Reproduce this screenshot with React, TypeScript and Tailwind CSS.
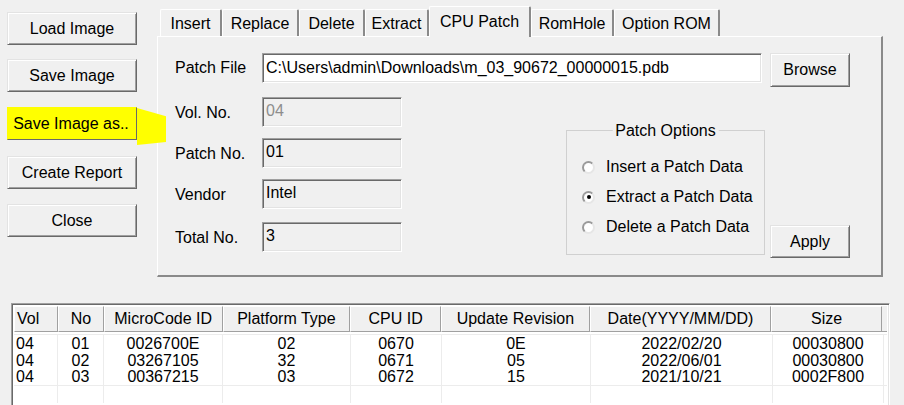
import React from 'react';

const raised =
  'border border-t-[#e3e3e3] border-l-[#e3e3e3] border-r-[#696969] border-b-[#696969] shadow-[inset_1px_1px_0_#ffffff,inset_-1px_-1px_0_#a0a0a0]';
const sunken =
  'border border-t-[#a0a0a0] border-l-[#a0a0a0] border-r-white border-b-white shadow-[inset_1px_1px_0_#696969,inset_-1px_-1px_0_#e3e3e3]';

const WinButton = ({ label, className = '' }: { label: string; className?: string }) => (
  <button className={`flex items-center justify-center bg-[#f0f0f0] text-black ${raised} ${className}`}>
    {label}
  </button>
);

const tabs = [
  { name: 'Insert', w: 'w-[62px]' },
  { name: 'Replace', w: 'w-[77px]' },
  { name: 'Delete', w: 'w-[66px]' },
  { name: 'Extract', w: 'w-[64px]' },
  { name: 'CPU Patch', w: 'w-[102px]', active: true },
  { name: 'RomHole', w: 'w-[83px]' },
  { name: 'Option ROM', w: 'w-[106px]' },
];

const fields = [
  { label: 'Vol. No.', value: '04', disabled: true, mt: 'mt-0' },
  { label: 'Patch No.', value: '01', mt: 'mt-[11px]' },
  { label: 'Vendor', value: 'Intel', mt: 'mt-[11px]' },
  { label: 'Total No.', value: '3', mt: 'mt-[13px]' },
];

const options = [
  { label: 'Insert a Patch Data', checked: false },
  { label: 'Extract a Patch Data', checked: true },
  { label: 'Delete a Patch Data', checked: false },
];

const columns = [
  { name: 'Vol', w: 'w-[44px]', left: true },
  { name: 'No', w: 'w-[46px]' },
  { name: 'MicroCode ID', w: 'w-[119px]' },
  { name: 'Platform Type', w: 'w-[128px]' },
  { name: 'CPU ID', w: 'w-[91px]' },
  { name: 'Update Revision', w: 'w-[149px]' },
  { name: 'Date(YYYY/MM/DD)', w: 'w-[182px]' },
  { name: 'Size', w: 'w-[111px]' },
];

const rows = [
  ['04', '01', '0026700E', '02', '0670', '0E', '2022/02/20', '00030800'],
  ['04', '02', '03267105', '32', '0671', '05', '2022/06/01', '00030800'],
  ['04', '03', '00367215', '03', '0672', '15', '2021/10/21', '0002F800'],
  ['', '', '', '', '', '', '', ''],
];

// classic sunken radio circle
const Radio = ({ checked }: { checked: boolean }) => (
  <span className="flex h-[13px] w-[13px] shrink-0 items-center justify-center rounded-full border-2 border-t-[#9a9a9a] border-l-[#9a9a9a] border-r-[#e6e6e6] border-b-[#e6e6e6] bg-white">
    {checked && <span className="h-[4px] w-[4px] rounded-full bg-black" />}
  </span>
);

export default function App() {
  return (
    <div className="h-[405px] w-[904px] overflow-hidden bg-[#f0f0f0] font-['Liberation_Sans',Arial,sans-serif] text-[16px] leading-none text-black">
      <div className="flex h-[277px] pt-[6px]">
        {/* left button column */}
        <div className="ml-[7px] flex w-[130px] flex-col pt-[6px]">
          <WinButton label="Load Image" className="h-[33px] w-[130px]" />
          <WinButton label="Save Image" className="mt-[14px] h-[33px] w-[130px]" />
          <div className="relative mt-[15px] h-[33px] w-[130px]">
            <button className="relative flex h-[33px] w-[130px] items-center justify-center border border-[#ffff00] border-r-[#696969] border-b-[#696969] bg-[#ffff00] pr-[2px] text-black">
              Save Image as..
            </button>
            <div className="absolute left-[130px] top-[1px] h-[37px] w-[29px] bg-[#ffff00] [clip-path:polygon(0_0,100%_22%,100%_92%,0_100%)]" />
          </div>
          <WinButton label="Create Report" className="mt-[16px] h-[33px] w-[130px]" />
          <WinButton label="Close" className="mt-[15px] h-[33px] w-[130px]" />
        </div>

        {/* tab control */}
        <div className="ml-[20px] flex w-[726px] flex-col">
          <div className="flex h-[30px] items-end pl-[3px]">
            {tabs.map((t) =>
              t.active ? (
                <div
                  key={t.name}
                  className={`relative z-10 -mb-[1px] flex h-[31px] items-start justify-center rounded-t-[2px] border-t border-l border-white border-r-2 border-r-[#8a8a8a] bg-[#f0f0f0] pt-[7px] ${t.w}`}
                >
                  {t.name}
                </div>
              ) : (
                <div
                  key={t.name}
                  className={`flex h-[27px] items-start justify-center rounded-t-[2px] border-t border-l border-white border-r-2 border-r-[#8a8a8a] bg-[#f0f0f0] pt-[6px] ${t.w}`}
                >
                  {t.name}
                </div>
              )
            )}
          </div>

          <div className="h-[241px] border-t border-l border-white border-r-2 border-b-2 border-r-[#8a8a8a] border-b-[#8a8a8a] pl-[17px] pt-[16px]">
            <div className="flex h-[34px] items-start">
              <div className="flex h-[30px] w-[87px] items-center">Patch File</div>
              <div className={`flex h-[30px] w-[500px] items-center bg-white pl-[3px] ${sunken}`}>
                C:\Users\admin\Downloads\m_03_90672_00000015.pdb
              </div>
              <WinButton label="Browse" className="ml-[8px] h-[34px] w-[80px]" />
            </div>

            <div className="mt-[10px] flex items-start">
              <div className="flex w-[227px] flex-col">
                {fields.map((f) => (
                  <div key={f.label} className={`flex h-[30px] items-center ${f.mt}`}>
                    <div className="w-[87px] pt-[2px]">{f.label}</div>
                    <div
                      className={`h-[30px] w-[140px] pl-[3px] pt-[4px] leading-[18px] ${sunken} ${
                        f.disabled ? 'text-[#8d8d8d]' : 'text-black'
                      }`}
                    >
                      {f.value}
                    </div>
                  </div>
                ))}
              </div>

              <div className="relative ml-[164px] mt-[33px] h-[125px] w-[199px] border border-[#d0d0d0] pl-[15px] pt-[21px]">
                <span className="absolute -top-[9px] left-1/2 -translate-x-1/2 whitespace-nowrap bg-[#f0f0f0] px-[3px] leading-[18px]">
                  Patch Options
                </span>
                {options.map((o) => (
                  <div key={o.label} className="flex h-[30px] items-center">
                    <Radio checked={o.checked} />
                    <span className="ml-[11px] whitespace-nowrap">{o.label}</span>
                  </div>
                ))}
              </div>

              <WinButton label="Apply" className="ml-[5px] mt-[128px] h-[33px] w-[80px]" />
            </div>
          </div>
        </div>
      </div>

      {/* list view */}
      <div className={`ml-[11px] mt-[26px] h-[110px] w-[879px] bg-white p-[2px] ${sunken}`}>
        <div className="flex h-[26px]">
          {columns.map((c) => (
            <div
              key={c.name}
              className={`flex h-[26px] items-center border border-t-white border-l-white border-r-[#a0a0a0] border-b-[#a0a0a0] bg-[#f0f0f0] ${c.w} ${
                c.left ? 'justify-start pl-[2px]' : 'justify-center'
              }`}
            >
              {c.name}
            </div>
          ))}
          <div className="h-[26px] w-[5px] border-b border-[#a0a0a0] bg-[#f0f0f0]" />
        </div>
        <div className="mt-[2px] border-t border-[#ececec]">
          {rows.map((r, i) => (
            <div key={i} className={`flex h-[17px] ${i === 2 ? 'border-b border-[#ececec]' : ''}`}>
              {r.map((v, j) => (
                <div
                  key={j}
                  className={`flex items-center border-r border-[#ececec] ${columns[j].w} ${
                    columns[j].left ? 'justify-start pl-[2px]' : 'justify-center'
                  }`}
                >
                  {v}
                </div>
              ))}
            </div>
          ))}
        </div>
      </div>
    </div>
  );
}
